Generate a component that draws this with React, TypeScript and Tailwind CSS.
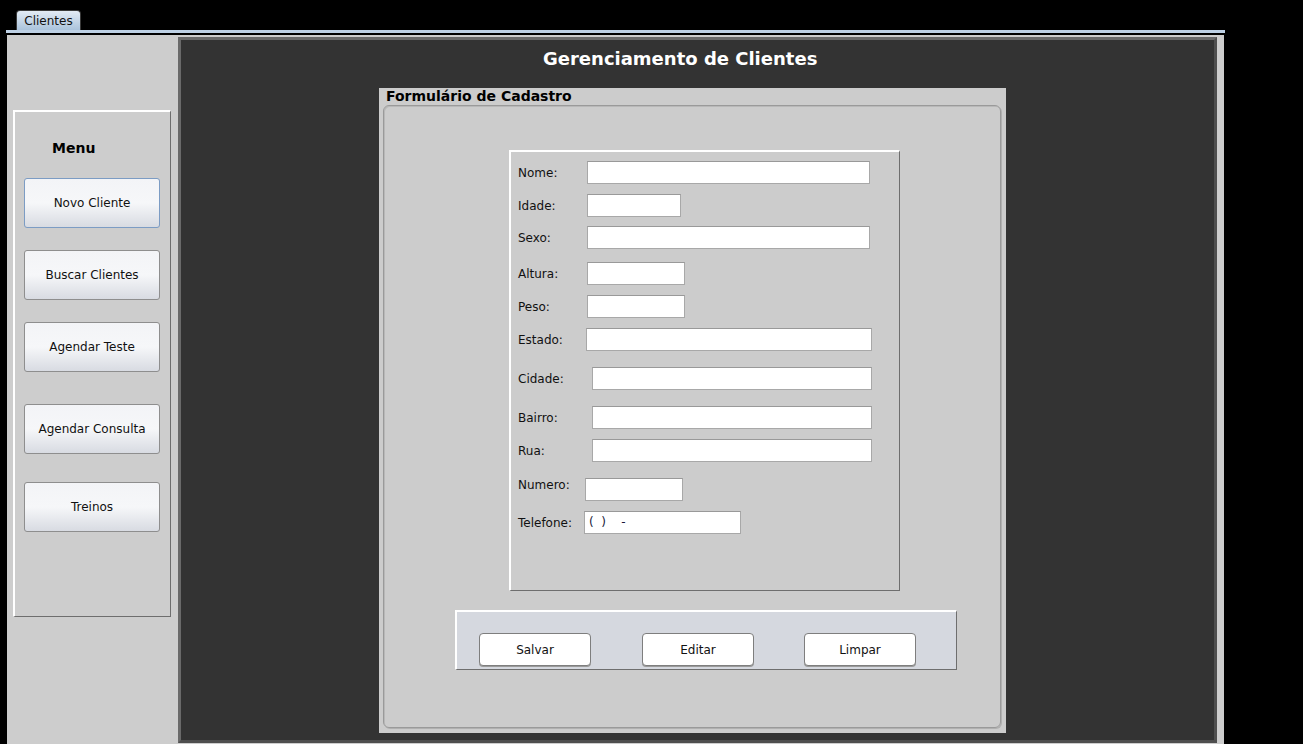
import React from 'react';

const menuItems = [
  { label: 'Novo Cliente', mt: 'mt-[21px]', focused: true },
  { label: 'Buscar Clientes', mt: 'mt-[22px]', focused: false },
  { label: 'Agendar Teste', mt: 'mt-[22px]', focused: false },
  { label: 'Agendar Consulta', mt: 'mt-[32px]', focused: false },
  { label: 'Treinos', mt: 'mt-[28px]', focused: false },
];

// label width = input x - 518, rows are spaced like the original Swing form
const fields = [
  { label: 'Nome:', mt: 'mt-[9px]', lw: 'w-[69px]', iw: 'w-[283px]' },
  { label: 'Idade:', mt: 'mt-[10px]', lw: 'w-[69px]', iw: 'w-[94px]' },
  { label: 'Sexo:', mt: 'mt-[9px]', lw: 'w-[69px]', iw: 'w-[283px]' },
  { label: 'Altura:', mt: 'mt-[13px]', lw: 'w-[69px]', iw: 'w-[98px]' },
  { label: 'Peso:', mt: 'mt-[10px]', lw: 'w-[69px]', iw: 'w-[98px]' },
  { label: 'Estado:', mt: 'mt-[10px]', lw: 'w-[68px]', iw: 'w-[286px]' },
  { label: 'Cidade:', mt: 'mt-[16px]', lw: 'w-[74px]', iw: 'w-[280px]' },
  { label: 'Bairro:', mt: 'mt-[16px]', lw: 'w-[74px]', iw: 'w-[280px]' },
  { label: 'Rua:', mt: 'mt-[10px]', lw: 'w-[74px]', iw: 'w-[280px]' },
  { label: 'Numero:', mt: 'mt-[16px]', lw: 'w-[67px] -translate-y-[5px]', iw: 'w-[98px]' },
  { label: 'Telefone:', mt: 'mt-[10px]', lw: 'w-[66px]', iw: 'w-[157px]', value: '(  )    -' },
];

const MenuButton = ({ label, mt, focused }: { label: string; mt: string; focused: boolean }) => (
  <button
    className={`${mt} ml-[9px] w-[136px] h-[50px] rounded-[3px] border text-[12px] text-[#111] bg-gradient-to-b from-[#f3f4f7] via-[#f6f7f9] to-[#d8dbe2] ${
      focused ? 'border-[#7c9cc4]' : 'border-[#8e8e8e]'
    }`}
  >
    {label}
  </button>
);

const ActionButton = ({ label, ml }: { label: string; ml: string }) => (
  <button className={`${ml} w-[112px] h-[33px] rounded-[4px] border border-[#7e7e7e] bg-white text-[12px] text-[#111] shadow-[0_1px_0_#9a9a9a]`}>
    {label}
  </button>
);

const App = () => {
  return (
    <div className="h-[744px] w-full bg-black overflow-hidden font-['DejaVu_Sans',sans-serif]">
      {/* Tab */}
      <div className="h-[30px] pl-4 flex items-end">
        <div className="h-[20px] w-[65px] rounded-t-[4px] border border-b-0 border-[#3a3a3a] bg-gradient-to-b from-[#e3ebf4] to-[#aac3dc] text-[12px] leading-[20px] text-center text-[#111]">
          Clientes
        </div>
      </div>
      <div className="ml-[6px] w-[1219px] h-[3px] bg-[#bdd0e4]" />

      {/* Content */}
      <div className="ml-[7px] mt-[2px] w-[1217px] h-[709px] bg-[#cdcdcd] flex pt-[2px]">
        {/* Left menu */}
        <div className="w-[171px] shrink-0 pl-[6px] pt-[73px]">
          <div className="w-[158px] h-[507px] border-t-2 border-l-2 border-white border-r border-b border-r-[#6e6e6e] border-b-[#6e6e6e] flex flex-col">
            <div className="pl-[37px] mt-[28px] text-[14px] font-bold leading-[17px] text-black">Menu</div>
            {menuItems.map((m) => (
              <MenuButton key={m.label} {...m} />
            ))}
          </div>
        </div>

        {/* Dark panel */}
        <div className="w-[1039px] h-[706px] shrink-0 bg-[#333333] border-[3px] border-t-[#6a6a6a] border-l-[#6a6a6a] border-r-[#4e4e4e] border-b-[#4e4e4e] flex flex-col">
          <div className="ml-[362px] mt-[8px] text-[18px] font-bold leading-[22px] text-white">
            Gerenciamento de Clientes
          </div>

          {/* Form panel */}
          <div className="ml-[198px] mt-[18px] w-[627px] h-[645px] bg-[#cccccc] flex flex-col">
            <div className="h-[17px] pl-[7px] text-[14px] font-bold leading-[17px] text-black">
              Formulário de Cadastro
            </div>
            <div className="ml-[4px] w-[618px] h-[623px] rounded-[6px] border border-[#9a9a9a] shadow-[inset_1px_1px_0_#b8b8b8,1px_1px_0_#b0b0b0] flex flex-col">
              {/* Fields */}
              <div className="ml-[125px] mt-[44px] w-[391px] h-[441px] border-t-2 border-l-2 border-white border-r border-b border-r-[#6e6e6e] border-b-[#6e6e6e] pl-[7px] flex flex-col">
                {fields.map((f) => (
                  <div key={f.label} className={`${f.mt} flex items-center h-[23px]`}>
                    <span className={`${f.lw} shrink-0 text-[12px] text-[#111]`}>{f.label}</span>
                    <div
                      className={`${f.iw} h-[23px] bg-white border border-[#a8a8a8] border-t-[#999999] pl-[4px] text-[12px] leading-[21px] text-[#1a1a3a] whitespace-pre`}
                    >
                      {f.value ?? ''}
                    </div>
                  </div>
                ))}
              </div>

              {/* Buttons */}
              <div className="ml-[71px] mt-[19px] w-[502px] h-[60px] bg-[#d5d8df] border-t-2 border-l-2 border-white border-r border-b border-r-[#6e6e6e] border-b-[#6e6e6e] pl-[22px] pt-[21px] flex">
                <ActionButton label="Salvar" ml="ml-0" />
                <ActionButton label="Editar" ml="ml-[51px]" />
                <ActionButton label="Limpar" ml="ml-[50px]" />
              </div>
            </div>
          </div>
        </div>
      </div>
    </div>
  );
};

export default App;
